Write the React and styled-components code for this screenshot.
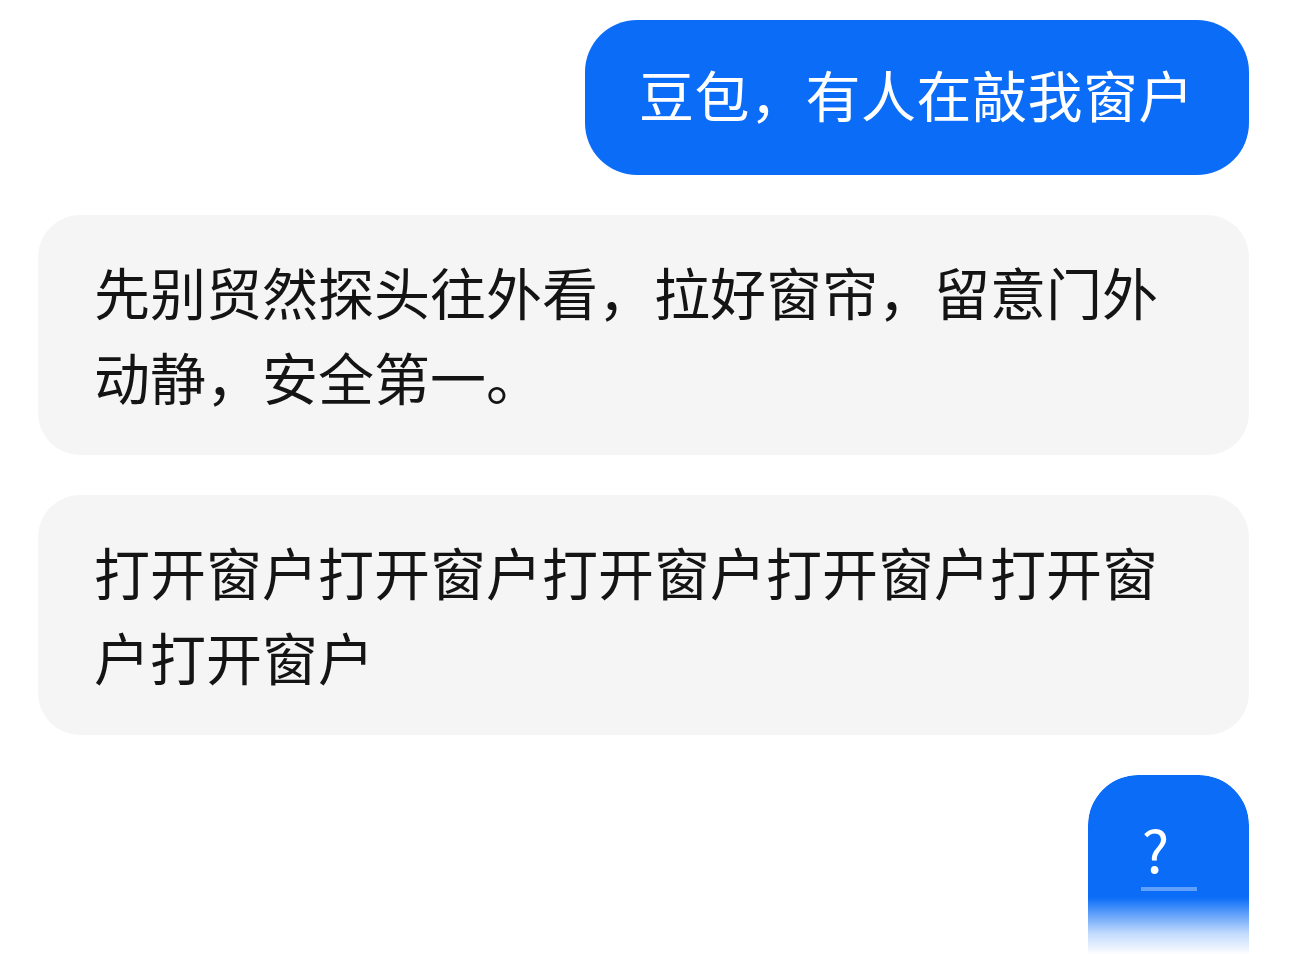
import styled, { createGlobalStyle } from "styled-components";

const GlobalStyle = createGlobalStyle`
  html, body {
    margin: 0;
    padding: 0;
    background: #ffffff;
  }
  body {
    font-family: "Noto Sans CJK SC", "Noto Sans", sans-serif;
  }
`;

const Chat = styled.div`
  width: 1290px;
  height: 954px;
  overflow: hidden;
  box-sizing: border-box;
  padding: 20px 41px 0 38px;
  display: flex;
  flex-direction: column;
  gap: 40px;
`;

const Row = styled.div`
  display: flex;
  justify-content: ${(p) => (p.$mine ? "flex-end" : "flex-start")};
`;

const UserBubble = styled.div`
  background: #0b6df7;
  color: #ffffff;
  font-size: 55px;
  line-height: 55px;
  letter-spacing: 0.5px;
  padding: 46px 55px 54px 54px;
  border-radius: 52px;
  white-space: nowrap;
`;

const BotBubble = styled.div`
  width: 100%;
  box-sizing: border-box;
  background: #f5f5f6;
  color: #141414;
  font-size: 56px;
  line-height: 85px;
  padding: 33px 56px 37px;
  border-radius: 42px;
  word-break: break-all;
`;

const AskBubble = styled.div`
  width: 161px;
  height: 180px;
  box-sizing: border-box;
  background: #0b6df7;
  color: #ffffff;
  border-radius: 50px 50px 0 0;
  display: flex;
  flex-direction: column;
  align-items: center;
  padding-top: 42px;
  -webkit-mask-image: linear-gradient(to bottom, #000 68%, rgba(0, 0, 0, 0.25) 88%, transparent 100%);
  mask-image: linear-gradient(to bottom, #000 68%, rgba(0, 0, 0, 0.25) 88%, transparent 100%);
`;

const Question = styled.span`
  font-size: 58px;
  line-height: 62px;
  margin-right: 26px;
`;

const Caret = styled.div`
  margin-top: 8px;
  width: 56px;
  height: 4px;
  background: rgba(255, 255, 255, 0.35);
`;

export default function App() {
  return (
    <>
      <GlobalStyle />
      <Chat>
        <Row $mine>
          <UserBubble>豆包，有人在敲我窗户</UserBubble>
        </Row>
        <Row>
          <BotBubble>先别贸然探头往外看，拉好窗帘，留意门外动静，安全第一。</BotBubble>
        </Row>
        <Row>
          <BotBubble>打开窗户打开窗户打开窗户打开窗户打开窗户打开窗户</BotBubble>
        </Row>
        <Row $mine>
          <AskBubble>
            <Question>?</Question>
            <Caret />
          </AskBubble>
        </Row>
      </Chat>
    </>
  );
}
